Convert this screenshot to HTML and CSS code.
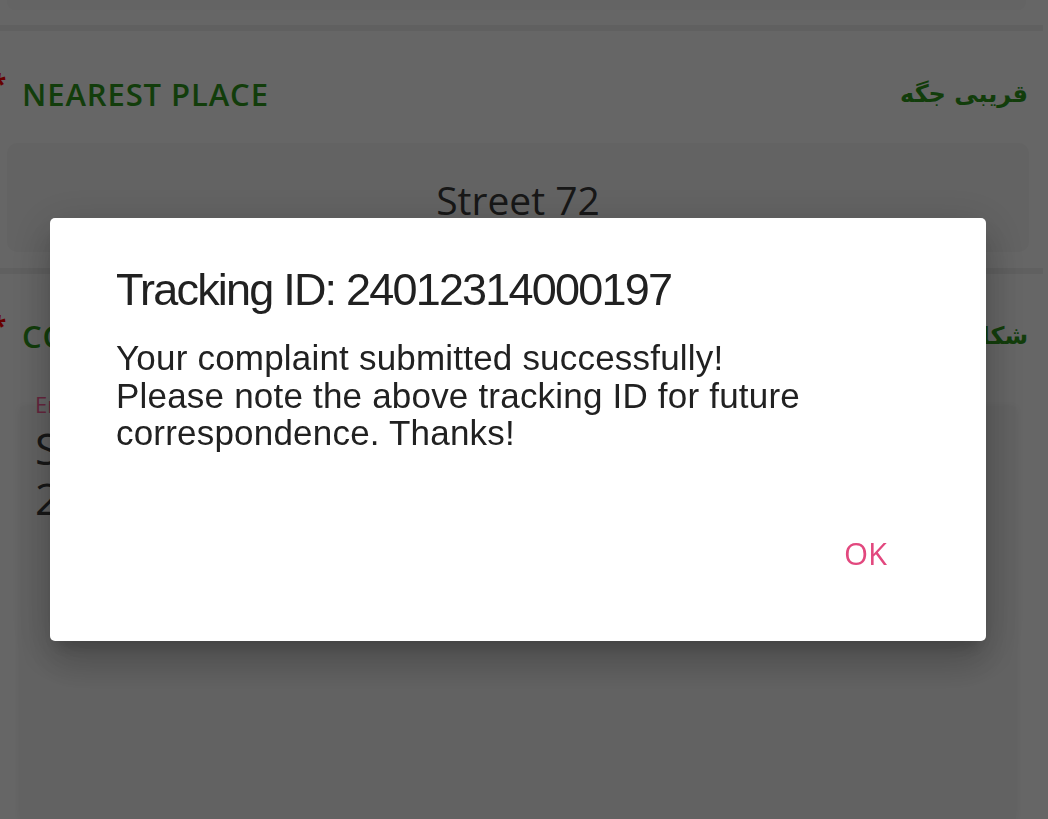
FILE: index.html
```html
<!DOCTYPE html>
<html lang="en">
<head>
<meta charset="utf-8">
<title>Complaint submitted</title>
<link rel="stylesheet" href="styles.css">
</head>
<body>
<main class="page">
  <div class="top-card"></div>
  <div class="divider"></div>
  <section class="field">
    <div class="label-row">
      <span class="req">*</span>
      <span class="label-en">NEAREST PLACE</span>
      <span class="label-ur" dir="rtl">قریبی جگه</span>
    </div>
    <div class="input-box">Street 72</div>
  </section>
  <div class="divider divider-tight"></div>
  <section class="field">
    <div class="label-row">
      <span class="req">*</span>
      <span class="label-en">COMPLAINT DETAILS</span>
      <span class="label-ur" dir="rtl">شکایت</span>
    </div>
    <div class="textarea-box">
      <span class="float-label">Enter complaint</span>
      <p class="textarea-text">Sewerage line blocked near the main road<br>2 days ago</p>
    </div>
  </section>
</main>
<div class="scrim"></div>
<div class="dialog" role="dialog">
  <h2 class="dialog-title">Tracking ID: 24012314000197</h2>
  <p class="dialog-body">Your complaint submitted successfully!<br>Please note the above tracking ID for future<br>correspondence. Thanks!</p>
  <div class="dialog-actions">
    <button class="dialog-btn">OK</button>
  </div>
</div>
</body>
</html>
```
FILE: styles.css
```css
html, body {
  margin: 0;
  height: 819px;
  overflow: hidden;
}
body {
  background: #ffffff;
  font-family: "Open Sans", "Noto Sans", sans-serif;
}
.page {
  display: flex;
  flex-direction: column;
}
.top-card {
  height: 10px;
  margin: 0 22px 0 7px;
  background: #f9f9f9;
  border-radius: 0 0 8px 8px;
}
.divider {
  height: 6px;
  margin-top: 15px;
  margin-right: 5px;
  background: #efefef;
}
.divider-tight {
  margin-top: 0;
}
.field {
  display: flex;
  flex-direction: column;
}
.label-row {
  display: flex;
  align-items: flex-start;
  height: 42px;
  padding: 0 20px 0 0;
}
.req {
  font-size: 26px;
  font-weight: bold;
  line-height: 26px;
  margin: -2px 0 0 -8px;
  width: 13px;
  color: #ff0000;
}
.label-en {
  margin-left: 17px;
  font-size: 31px;
  font-weight: 600;
  line-height: 42px;
  letter-spacing: 0.9px;
  color: #2f9a1c;
  white-space: nowrap;
}
.label-ur {
  margin-left: auto;
  font-family: "DejaVu Sans", "Noto Sans", sans-serif;
  font-weight: bold;
  font-size: 24px;
  line-height: 42px;
  color: #2f9a1c;
}
.field:nth-of-type(1) .label-row { margin-top: 42px; }
.field:nth-of-type(2) .label-row { margin-top: 41px; }
.input-box {
  margin: 28px 19px 16px 7px;
  height: 109px;
  box-sizing: border-box;
  padding-top: 4px;
  background: #f7f7f7;
  border-radius: 10px;
  text-align: center;
  font-size: 39px;
  line-height: 105px;
  color: #3a3a3a;
}
.textarea-box {
  position: relative;
  margin: 50px 32px 0 20px;
  height: 396px;
  padding: 16px 15px 0;
  background: #f6f6f6;
  box-shadow: 0 0 8px rgba(0,0,0,0.08);
}
.float-label {
  position: absolute;
  left: 15px;
  top: -16px;
  font-size: 22px;
  line-height: 26px;
  color: #ff5f9b;
}
.textarea-text {
  margin: 0;
  font-size: 44px;
  line-height: 50px;
  color: #3a3a3a;
  white-space: nowrap;
}
.scrim {
  position: fixed;
  inset: 0;
  background: rgba(0, 0, 0, 0.6);
}
.dialog {
  position: fixed;
  left: 50px;
  top: 218px;
  width: 936px;
  box-sizing: border-box;
  padding: 49px 99px 72px 66px;
  background: #ffffff;
  border-radius: 5px;
  box-shadow: 0 11px 15px -7px rgba(0,0,0,0.2), 0 24px 38px 3px rgba(0,0,0,0.14), 0 9px 46px 8px rgba(0,0,0,0.12);
  font-family: "Liberation Sans", Arial, sans-serif;
  color: #212121;
}
.dialog-title {
  margin: 0;
  font-weight: normal;
  font-size: 45px;
  line-height: 45px;
  letter-spacing: -1.8px;
}
.dialog-body {
  margin: 27px 0 0;
  font-size: 35px;
  line-height: 37.5px;
  letter-spacing: 0.2px;
  white-space: nowrap;
}
.dialog-actions {
  display: flex;
  justify-content: flex-end;
  margin-top: 86px;
}
.dialog-btn {
  border: 0;
  background: none;
  padding: 0;
  font-family: "Open Sans", "Noto Sans", sans-serif;
  font-size: 31px;
  line-height: 31px;
  color: #e2487e;
}
```
